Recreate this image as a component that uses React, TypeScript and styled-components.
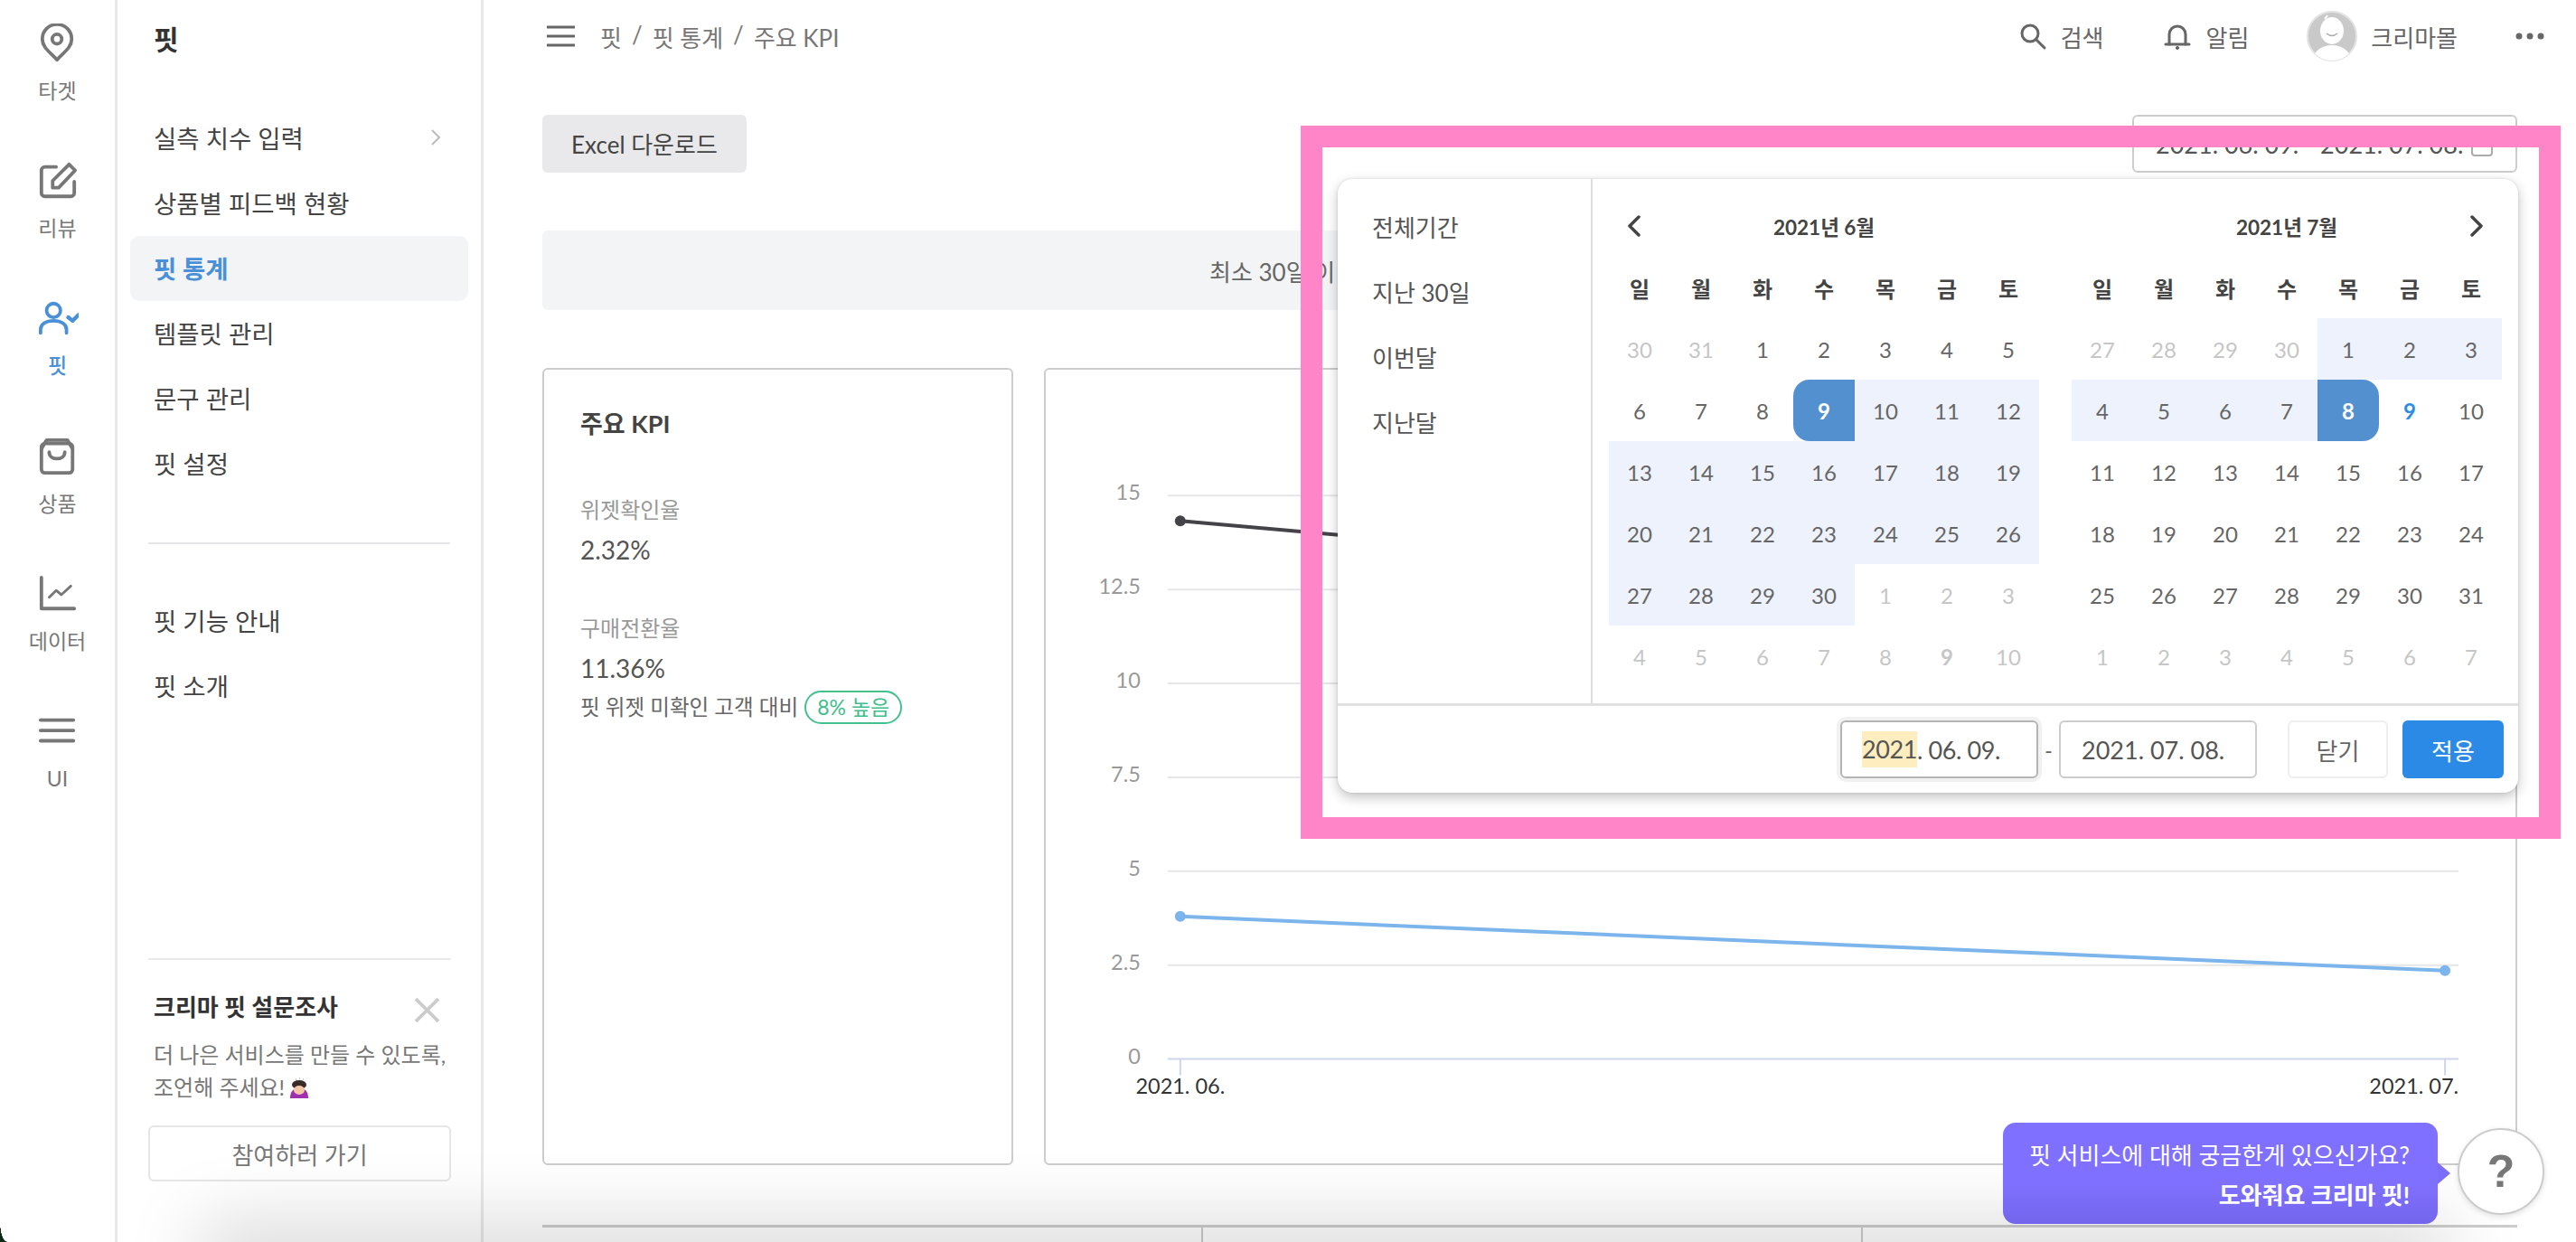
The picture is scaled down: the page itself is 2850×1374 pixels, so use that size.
import React from "react";
import styled, { createGlobalStyle } from "styled-components";

const GlobalStyle = createGlobalStyle`
  html, body {
    margin: 0;
    padding: 0;
    background: #fff;
  }
  body {
    font-family: Lato, "Noto Sans CJK KR", sans-serif;
    color: #444;
    overflow: hidden;
  }
  * {
    box-sizing: border-box;
  }
`;

const Page = styled.div`
  position: relative;
  display: flex;
  width: 2850px;
  height: 1374px;
  overflow: hidden;
  background: #fff;
`;

/* left icon rail */
const Rail = styled.nav`
  flex: 0 0 130px;
  border-right: 3px solid #e9e9e9;
  display: flex;
  flex-direction: column;
`;

const RailItem = styled.div<{ $active?: boolean }>`
  height: 152.2px;
  padding-top: 26px;
  display: flex;
  flex-direction: column;
  align-items: center;
  gap: 15px;
  color: ${(p) => (p.$active ? "#4a90d9" : "#777")};
  font-size: 23px;
  line-height: 30px;
  font-weight: ${(p) => (p.$active ? 500 : 400)};
`;

const RailIcon = styled.svg`
  display: block;
  width: 46px;
  height: 44px;
  fill: none;
  stroke: currentColor;
  stroke-width: 4;
  stroke-linecap: round;
  stroke-linejoin: round;
`;

/* second level menu */
const Side = styled.aside`
  flex: 0 0 405px;
  height: 1374px;
  border-right: 3px solid #e9e9e9;
  padding: 0 14px 67px;
  display: flex;
  flex-direction: column;
`;

const SideTitle = styled.h2`
  margin: 0 0 31px;
  height: 86px;
  padding-left: 26px;
  font-size: 30px;
  line-height: 86px;
  font-weight: 700;
  color: #333;
`;

const MenuItem = styled.div<{ $active?: boolean }>`
  height: 72px;
  padding: 0 30px 2px 26px;
  display: flex;
  align-items: center;
  justify-content: space-between;
  border-radius: 10px;
  font-size: 27.5px;
  font-weight: ${(p) => (p.$active ? 700 : 400)};
  color: ${(p) => (p.$active ? "#4a90d9" : "#444")};
  background: ${(p) => (p.$active ? "#f3f4f6" : "transparent")};
`;

const SideDivider = styled.hr`
  border: 0;
  height: 2px;
  width: 334px;
  background: #e6e6e8;
  margin: 51px 0 49px 20px;
`;

const Survey = styled.section`
  margin: auto 0 0 20px;
  width: 335px;
  border-top: 2px solid #e9e9e9;
  padding-top: 32px;
`;

const SurveyHead = styled.div`
  display: flex;
  align-items: center;
  justify-content: space-between;
  height: 36px;
  padding: 0 13px 0 6px;
  font-size: 26px;
  font-weight: 700;
  color: #333;
  margin-bottom: 19px;
`;

const SurveyClose = styled.svg`
  width: 27px;
  height: 27px;
  margin-top: 10px;
  stroke: #ccc;
  stroke-width: 3.6;
`;

const SurveyText = styled.p`
  margin: 0 0 24px;
  padding-left: 6px;
  font-size: 24px;
  line-height: 36px;
  color: #777;
  white-space: nowrap;
`;

const SurveyButton = styled.div`
  height: 62px;
  display: flex;
  align-items: center;
  justify-content: center;
  border: 2px solid #e6e6e6;
  border-radius: 6px;
  font-size: 26px;
  color: #777;
`;

const Emoji = styled.svg`
  width: 24px;
  height: 24px;
  vertical-align: -4px;
  margin-left: 4px;
`;

/* main column */
const Main = styled.main`
  flex: 1;
  min-width: 0;
  padding: 0 65px;
  display: flex;
  flex-direction: column;
`;

const TopBar = styled.header`
  height: 80px;
  flex: none;
  margin-bottom: 47px;
  display: flex;
  align-items: center;
  color: #777;
  font-size: 26px;
`;

const Burger = styled.svg`
  width: 31px;
  height: 24px;
  margin: 0 28px 0 5px;
  stroke: #666;
  stroke-width: 3;
`;

const Crumbs = styled.div`
  display: flex;
  gap: 11px;
  white-space: nowrap;
`;

const TopActions = styled.div`
  margin-left: auto;
  display: flex;
  align-items: center;
  color: #666;
`;

const TopAction = styled.div<{ $gap?: number }>`
  display: flex;
  align-items: center;
  gap: 15px;
  margin-right: ${(p) => p.$gap ?? 0}px;
`;

const TopIcon = styled.svg`
  width: 32px;
  height: 32px;
  fill: none;
  stroke: #666;
  stroke-width: 3;
  stroke-linecap: round;
`;

const Avatar = styled.svg`
  width: 56px;
  height: 56px;
  margin-right: 15px;
`;

const Dots = styled.svg`
  width: 32px;
  height: 8px;
  margin-right: -30px;
  fill: #666;
`;

const Toolbar = styled.div`
  flex: none;
  height: 64px;
  display: flex;
  justify-content: space-between;
  margin-bottom: 64px;
`;

const ExcelButton = styled.div`
  width: 226px;
  padding-bottom: 2px;
  display: flex;
  align-items: center;
  justify-content: center;
  background: #e9e9eb;
  border-radius: 6px;
  font-size: 26px;
  color: #444;
`;

const RangeField = styled.div`
  width: 426px;
  border: 2px solid #ccc;
  border-radius: 6px;
  display: flex;
  align-items: center;
  justify-content: space-between;
  padding: 0 24px;
  font-size: 27px;
  color: #555;
  white-space: nowrap;
`;

const RangeIcon = styled.svg`
  width: 26px;
  height: 26px;
  margin-top: 4px;
  fill: none;
  stroke: #aaa;
  stroke-width: 2;
`;

const Notice = styled.div`
  flex: none;
  height: 88px;
  margin-bottom: 64px;
  padding-left: 738px;
  border-radius: 6px;
  background: #f3f4f6;
  display: flex;
  align-items: center;
  font-size: 26px;
  color: #666;
  white-space: nowrap;
`;

const CardRow = styled.div`
  flex: none;
  height: 882px;
  display: grid;
  grid-template-columns: 521px 1fr;
  gap: 34px;
  margin-bottom: 66px;
`;

const Card = styled.section`
  border: 2px solid #ccc;
  border-radius: 6px;
  overflow: hidden;
`;

const KpiCard = styled(Card)`
  padding: 42px 40px;
`;

const KpiTitle = styled.h3`
  margin: 0 0 60px;
  height: 36px;
  font-size: 27px;
  line-height: 36px;
  font-weight: 700;
  color: #444;
`;

const KpiBlock = styled.div`
  margin-bottom: 52px;
`;

const KpiLabel = styled.div`
  font-size: 24px;
  line-height: 34px;
  color: #999;
  margin-bottom: 9px;
`;

const KpiValue = styled.div`
  font-size: 28px;
  line-height: 36px;
  color: #555;
`;

const KpiCompare = styled.div`
  margin-top: 6px;
  display: flex;
  align-items: center;
  gap: 7px;
  font-size: 23.6px;
  line-height: 38px;
  color: #666;
  white-space: nowrap;
`;

const Badge = styled.span`
  height: 37px;
  padding: 0 12px;
  border: 2px solid #44c08f;
  border-radius: 19px;
  display: flex;
  align-items: center;
  font-size: 23px;
  color: #3fbd8b;
`;

const ChartSvg = styled.svg`
  display: block;
  width: 100%;
  height: 100%;
  font-family: Lato, "Noto Sans CJK KR", sans-serif;
  font-size: 23.5px;
`;

const BottomTable = styled.div`
  flex: none;
  height: 60px;
  display: grid;
  grid-template-columns: 729px 730px 1fr;
  border-top: 3px solid #ccc;
`;

const BottomCell = styled.div`
  & + & {
    border-left: 2px solid #ccc;
  }
`;

/* date range popup */
const RangePopup = styled.div`
  position: absolute;
  left: 1480px;
  top: 198px;
  width: 1306px;
  height: 679px;
  display: flex;
  flex-direction: column;
  background: #fff;
  border-radius: 16px;
  box-shadow: 0 5px 14px rgba(0, 0, 0, 0.24), 0 0 3px rgba(0, 0, 0, 0.12);
`;

const PopupBody = styled.div`
  flex: none;
  height: 583px;
  display: flex;
  border-bottom: 3px solid #e0e0e0;
`;

const Shortcuts = styled.ul`
  flex: 0 0 282px;
  margin: 0;
  padding: 16px 0 0 38px;
  list-style: none;
  border-right: 2px solid #ddd;
`;

const Shortcut = styled.li`
  height: 72px;
  display: flex;
  align-items: center;
  font-size: 26px;
  color: #555;
`;

const Months = styled.div`
  flex: 1;
  display: flex;
  gap: 36px;
  padding: 18px 18px 0;
`;

const Month = styled.div`
  width: 476px;
`;

const MonthHead = styled.div`
  height: 68px;
  display: grid;
  grid-template-columns: 68px 1fr 68px;
  align-items: center;
  justify-items: center;
  font-size: 22.5px;
  font-weight: 700;
  color: #444;
`;

const NavArrow = styled.svg<{ $shift: number }>`
  width: 16px;
  height: 24px;
  transform: translateX(${(p) => p.$shift}px);
  fill: none;
  stroke: #444;
  stroke-width: 3.5;
  stroke-linecap: round;
  stroke-linejoin: round;
`;

const DayGrid = styled.div`
  display: grid;
  grid-template-columns: repeat(7, 68px);
  grid-auto-rows: 68px;
`;

const WeekDay = styled.div`
  display: flex;
  align-items: center;
  justify-content: center;
  font-size: 24px;
  font-weight: 700;
  color: #444;
`;

type DayKind = "plain" | "muted" | "range" | "start" | "end" | "today" | "mutedToday";

const Day = styled.div<{ $kind: DayKind }>`
  display: flex;
  align-items: center;
  justify-content: center;
  font-size: 24px;
  color: ${(p) =>
    p.$kind === "muted" || p.$kind === "mutedToday"
      ? "#c6c6c6"
      : p.$kind === "start" || p.$kind === "end"
      ? "#fff"
      : p.$kind === "today"
      ? "#2b8de8"
      : "#666"};
  font-weight: ${(p) => (p.$kind === "today" || p.$kind === "mutedToday" || p.$kind === "start" || p.$kind === "end" ? 700 : 400)};
  background: ${(p) =>
    p.$kind === "range" ? "#edf2fc" : p.$kind === "start" || p.$kind === "end" ? "#5390d0" : "transparent"};
  border-radius: ${(p) => (p.$kind === "start" ? "18px 0 0 18px" : p.$kind === "end" ? "0 18px 18px 0" : "0")};
`;

const PopupFoot = styled.div`
  flex: 1;
  display: flex;
  align-items: flex-start;
  justify-content: flex-end;
  padding: 16px 16px 0 0;
`;

const DateInput = styled.div<{ $focus?: boolean }>`
  width: 219px;
  height: 64px;
  padding-left: ${(p) => (p.$focus ? 22 : 23)}px;
  display: flex;
  align-items: center;
  border: 2px solid ${(p) => (p.$focus ? "#b4b4b4" : "#ccc")};
  border-radius: 6px;
  font-size: 27px;
  letter-spacing: ${(p) => (p.$focus ? "-0.4px" : "0")};
  color: #555;
  box-shadow: ${(p) => (p.$focus ? "0 0 0 4px #f1f1f1" : "none")};
  white-space: pre;
`;

const DateHighlight = styled.span`
  background: #fdedbf;
  line-height: 40px;
`;

const Dash = styled.span`
  width: 23px;
  height: 64px;
  display: flex;
  align-items: center;
  justify-content: center;
  font-size: 24px;
  color: #666;
`;

const FootButton = styled.div<{ $primary?: boolean }>`
  width: ${(p) => (p.$primary ? 112 : 111)}px;
  height: 64px;
  margin-left: ${(p) => (p.$primary ? 16 : 34)}px;
  display: flex;
  align-items: center;
  justify-content: center;
  border-radius: 6px;
  font-size: 26px;
  border: ${(p) => (p.$primary ? "0" : "2px solid #eee")};
  background: ${(p) => (p.$primary ? "#2b8ae6" : "#fff")};
  color: ${(p) => (p.$primary ? "#fff" : "#666")};
`;

const PinkFrame = styled.div`
  position: absolute;
  left: 1439px;
  top: 139px;
  width: 1394px;
  height: 789px;
  border: 24px solid #ff85c8;
  pointer-events: none;
`;

/* floating help */
const HelpBubble = styled.div`
  position: absolute;
  left: 2216px;
  top: 1242px;
  width: 481px;
  height: 112px;
  padding: 14px 31px 0 0;
  border-radius: 14px;
  background: linear-gradient(180deg, #7f70ff 0%, #7f70ff 60%, #7466ec 100%);
  color: #fff;
  font-size: 26px;
  line-height: 44px;
  text-align: right;
  white-space: nowrap;
  &::after {
    content: "";
    position: absolute;
    left: 100%;
    top: 44px;
    border-left: 14px solid #7c6dfb;
    border-top: 12px solid transparent;
    border-bottom: 12px solid transparent;
  }
`;

const HelpStrong = styled.div`
  font-weight: 700;
`;

const HelpButton = styled.div`
  position: absolute;
  left: 2719px;
  top: 1248px;
  width: 96px;
  height: 96px;
  border-radius: 50%;
  border: 2px solid #ccc;
  background: #fff;
  box-shadow: 0 2px 6px rgba(0, 0, 0, 0.12);
  display: flex;
  align-items: center;
  justify-content: center;
  font-family: "Liberation Sans", sans-serif;
  font-size: 50px;
  font-weight: 700;
  color: #777;
`;

const BottomShade = styled.div`
  position: absolute;
  left: 240px;
  right: 160px;
  bottom: -24px;
  height: 24px;
  box-shadow: 0 0 80px 20px rgba(0, 0, 0, 0.17);
  pointer-events: none;
`;

const WindowCorner = styled.div`
  position: absolute;
  left: 0;
  bottom: 0;
  width: 8px;
  height: 22px;
  background: radial-gradient(ellipse 8px 22px at 100% 0, transparent 97%, #0a2a14 100%);
  pointer-events: none;
`;

const railItems = [
  { label: "타겟", icon: <><path d="M23 42C16 34 6 28 6 18a17 17 0 0 1 34 0C40 28 30 34 23 42Z" /><circle cx="23" cy="18" r="5.5" /></> },
  { label: "리뷰", icon: <><path d="M22 7H9a4 4 0 0 0-4 4v26a4 4 0 0 0 4 4h30a4 4 0 0 0 4-4V24" /><path d="M18 31v-8L37 4l7 7-19 20Z" /></> },
  { label: "핏", active: true, icon: <><circle cx="19" cy="14" r="8" /><path d="M4 40v-4c0-6 6-10 15-10s15 4 15 10v4" /><path d="M36 22l5 4 7-7" strokeWidth="4.5" /></> },
  { label: "상품", icon: <><rect x="5" y="8" width="36" height="34" rx="4" /><path d="M5 14l6-10h24l6 10" /><path d="M14 18c0 10 18 10 18 0" /></> },
  { label: "데이터", icon: <><path d="M5 4v36h38" /><path d="M14 27l8-8 6 5 11-10" strokeWidth="3" /></> },
  { label: "UI", icon: <><path d="M4 10h38M4 22h38M4 34h38" /></> },
];

const weekDays = ["일", "월", "화", "수", "목", "금", "토"];

type Cell = [number, DayKind];

const june: Cell[] = [
  [30, "muted"], [31, "muted"], [1, "plain"], [2, "plain"], [3, "plain"], [4, "plain"], [5, "plain"],
  [6, "plain"], [7, "plain"], [8, "plain"], [9, "start"], [10, "range"], [11, "range"], [12, "range"],
  [13, "range"], [14, "range"], [15, "range"], [16, "range"], [17, "range"], [18, "range"], [19, "range"],
  [20, "range"], [21, "range"], [22, "range"], [23, "range"], [24, "range"], [25, "range"], [26, "range"],
  [27, "range"], [28, "range"], [29, "range"], [30, "range"], [1, "muted"], [2, "muted"], [3, "muted"],
  [4, "muted"], [5, "muted"], [6, "muted"], [7, "muted"], [8, "muted"], [9, "mutedToday"], [10, "muted"],
];

const july: Cell[] = [
  [27, "muted"], [28, "muted"], [29, "muted"], [30, "muted"], [1, "range"], [2, "range"], [3, "range"],
  [4, "range"], [5, "range"], [6, "range"], [7, "range"], [8, "end"], [9, "today"], [10, "plain"],
  [11, "plain"], [12, "plain"], [13, "plain"], [14, "plain"], [15, "plain"], [16, "plain"], [17, "plain"],
  [18, "plain"], [19, "plain"], [20, "plain"], [21, "plain"], [22, "plain"], [23, "plain"], [24, "plain"],
  [25, "plain"], [26, "plain"], [27, "plain"], [28, "plain"], [29, "plain"], [30, "plain"], [31, "plain"],
  [1, "muted"], [2, "muted"], [3, "muted"], [4, "muted"], [5, "muted"], [6, "muted"], [7, "muted"],
];

const MonthCalendar = ({ title, cells, side }: { title: string; cells: Cell[]; side: "prev" | "next" }) => (
  <Month>
    <MonthHead>
      {side === "prev" ? (
        <NavArrow viewBox="0 0 16 24" $shift={-6}>
          <path d="M13 2L3 12l10 10" />
        </NavArrow>
      ) : (
        <span />
      )}
      <span>{title}</span>
      {side === "next" ? (
        <NavArrow viewBox="0 0 16 24" $shift={6}>
          <path d="M3 2l10 10L3 22" />
        </NavArrow>
      ) : (
        <span />
      )}
    </MonthHead>
    <DayGrid>
      {weekDays.map((d) => (
        <WeekDay key={d}>{d}</WeekDay>
      ))}
      {cells.map(([n, kind], i) => (
        <Day key={i} $kind={kind}>
          {n}
        </Day>
      ))}
    </DayGrid>
  </Month>
);

const yTicks = [
  { label: "15", y: 548 },
  { label: "12.5", y: 652 },
  { label: "10", y: 756 },
  { label: "7.5", y: 860 },
  { label: "5", y: 964 },
  { label: "2.5", y: 1068 },
  { label: "0", y: 1172 },
];

const KpiChart = () => (
  <ChartSvg viewBox="1157 409 1628 878">
    {yTicks.map((t) => (
      <g key={t.label}>
        <line x1="1292" x2="2722" y1={t.y} y2={t.y} stroke={t.y === 1172 ? "#ccd6eb" : "#e6e6e6"} strokeWidth="2" />
        <text x="1262" y={t.y + 5} textAnchor="end" fill="#999">
          {t.label}
        </text>
      </g>
    ))}
    <line x1="1306" x2="1306" y1="1172" y2="1190" stroke="#ccd6eb" strokeWidth="2" />
    <line x1="2707" x2="2707" y1="1172" y2="1190" stroke="#ccd6eb" strokeWidth="2" />
    <text x="1306" y="1210" textAnchor="middle" fill="#333">
      2021. 06.
    </text>
    <text x="2722" y="1210" textAnchor="end" fill="#333">
      2021. 07.
    </text>
    <line x1="1306" y1="576" x2="2707" y2="699" stroke="#434348" strokeWidth="4" />
    <circle cx="1306" cy="576" r="6" fill="#434348" />
    <circle cx="2707" cy="699" r="6" fill="#434348" />
    <line x1="1306" y1="1014" x2="2707" y2="1074" stroke="#7cb5ec" strokeWidth="4" />
    <circle cx="1306" cy="1014" r="6" fill="#7cb5ec" />
    <circle cx="2707" cy="1074" r="6" fill="#7cb5ec" />
  </ChartSvg>
);

export default function App() {
  return (
    <Page>
      <GlobalStyle />
      <Rail>
        {railItems.map((item) => (
          <RailItem key={item.label} $active={item.active}>
            <RailIcon viewBox="0 0 48 46">{item.icon}</RailIcon>
            {item.label}
          </RailItem>
        ))}
      </Rail>

      <Side>
        <SideTitle>핏</SideTitle>
        <MenuItem>
          실측 치수 입력
          <svg width="12" height="20" viewBox="0 0 12 20" fill="none" stroke="#bbb" strokeWidth="2">
            <path d="M2 2l8 8-8 8" />
          </svg>
        </MenuItem>
        <MenuItem>상품별 피드백 현황</MenuItem>
        <MenuItem $active>핏 통계</MenuItem>
        <MenuItem>템플릿 관리</MenuItem>
        <MenuItem>문구 관리</MenuItem>
        <MenuItem>핏 설정</MenuItem>
        <SideDivider />
        <MenuItem>핏 기능 안내</MenuItem>
        <MenuItem>핏 소개</MenuItem>
        <Survey>
          <SurveyHead>
            크리마 핏 설문조사
            <SurveyClose viewBox="0 0 26 26">
              <path d="M1 1l24 24M25 1L1 25" />
            </SurveyClose>
          </SurveyHead>
          <SurveyText>
            더 나은 서비스를 만들 수 있도록,
            <br />
            조언해 주세요!
            <Emoji viewBox="0 0 24 24">
              <path d="M2 23c0-7 3-10 6-10h8c3 0 6 3 6 10Z" fill="#a02fb0" />
              <ellipse cx="12" cy="8" rx="8" ry="5" fill="#3a2a2a" />
              <ellipse cx="12" cy="14" rx="6" ry="5" fill="#f3c7a5" />
              <path d="M8 2h1M12 1h1M16 2h1" stroke="#999" strokeWidth="1" />
            </Emoji>
          </SurveyText>
          <SurveyButton>참여하러 가기</SurveyButton>
        </Survey>
      </Side>

      <Main>
        <TopBar>
          <Burger viewBox="0 0 31 24">
            <path d="M0 2h31M0 12h31M0 22h31" />
          </Burger>
          <Crumbs>
            <span>핏</span>
            <span>/</span>
            <span>핏 통계</span>
            <span>/</span>
            <span>주요 KPI</span>
          </Crumbs>
          <TopActions>
            <TopAction $gap={66}>
              <TopIcon viewBox="0 0 32 32">
                <circle cx="13" cy="13" r="9" />
                <path d="M20 20l9 9" />
              </TopIcon>
              검색
            </TopAction>
            <TopAction $gap={64}>
              <TopIcon viewBox="0 0 32 32">
                <path d="M7 25V14a9 9 0 0 1 18 0v11" />
                <path d="M3 25h26" />
                <circle cx="16" cy="29" r="1.6" fill="#666" strokeWidth="1" />
              </TopIcon>
              알림
            </TopAction>
            <TopAction $gap={64} style={{ gap: 0 }}>
              <Avatar viewBox="0 0 56 56">
                <defs>
                  <clipPath id="av">
                    <circle cx="28" cy="28" r="27" />
                  </clipPath>
                </defs>
                <circle cx="28" cy="28" r="27" fill="#c9c9c9" stroke="#e2e2e2" strokeWidth="2" />
                <g clipPath="url(#av)">
                  <ellipse cx="28" cy="54" rx="21" ry="16" fill="#fff" />
                  <ellipse cx="28" cy="22" rx="13" ry="15" fill="#fff" />
                  <path d="M22 25q6 5 12 0" fill="none" stroke="#aaa" strokeWidth="1.5" />
                  <path d="M20 9l3-4" stroke="#fff" strokeWidth="2" />
                </g>
              </Avatar>
              크리마몰
            </TopAction>
            <Dots viewBox="0 0 32 8">
              <circle cx="4" cy="4" r="3.5" />
              <circle cx="16" cy="4" r="3.5" />
              <circle cx="28" cy="4" r="3.5" />
            </Dots>
          </TopActions>
        </TopBar>

        <Toolbar>
          <ExcelButton>Excel 다운로드</ExcelButton>
          <RangeField>
            2021. 06. 09. - 2021. 07. 08.
            <RangeIcon viewBox="0 0 26 26">
              <rect x="2" y="4" width="22" height="20" rx="3" />
            </RangeIcon>
          </RangeField>
        </Toolbar>

        <Notice>최소 30일 이</Notice>

        <CardRow>
          <KpiCard>
            <KpiTitle>주요 KPI</KpiTitle>
            <KpiBlock>
              <KpiLabel>위젯확인율</KpiLabel>
              <KpiValue>2.32%</KpiValue>
            </KpiBlock>
            <KpiBlock>
              <KpiLabel>구매전환율</KpiLabel>
              <KpiValue>11.36%</KpiValue>
              <KpiCompare>
                핏 위젯 미확인 고객 대비
                <Badge>8% 높음</Badge>
              </KpiCompare>
            </KpiBlock>
          </KpiCard>
          <Card>
            <KpiChart />
          </Card>
        </CardRow>

        <BottomTable>
          <BottomCell />
          <BottomCell />
          <BottomCell />
        </BottomTable>
      </Main>

      <BottomShade />
      <WindowCorner />

      <RangePopup>
        <PopupBody>
          <Shortcuts>
            <Shortcut>전체기간</Shortcut>
            <Shortcut>지난 30일</Shortcut>
            <Shortcut>이번달</Shortcut>
            <Shortcut>지난달</Shortcut>
          </Shortcuts>
          <Months>
            <MonthCalendar title="2021년 6월" cells={june} side="prev" />
            <MonthCalendar title="2021년 7월" cells={july} side="next" />
          </Months>
        </PopupBody>
        <PopupFoot>
          <DateInput $focus>
            <DateHighlight>2021</DateHighlight>. 06. 09.
          </DateInput>
          <Dash>-</Dash>
          <DateInput>2021. 07. 08.</DateInput>
          <FootButton>닫기</FootButton>
          <FootButton $primary>적용</FootButton>
        </PopupFoot>
      </RangePopup>
      <PinkFrame />

      <HelpBubble>
        핏 서비스에 대해 궁금한게 있으신가요?
        <HelpStrong>도와줘요 크리마 핏!</HelpStrong>
      </HelpBubble>
      <HelpButton>?</HelpButton>
    </Page>
  );
}
